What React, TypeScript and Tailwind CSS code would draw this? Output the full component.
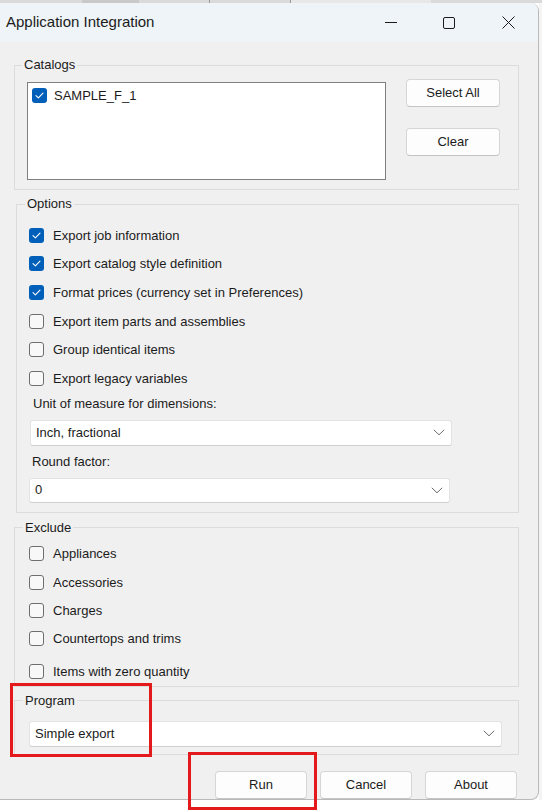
import React from "react";

const font = { fontFamily: '"Liberation Sans", Arial, sans-serif' };

function Check({ checked }: { checked?: boolean }) {
  if (checked) {
    return (
      <span className="w-[15px] h-[15px] rounded-[3px] bg-[#005fb8] flex items-center justify-center shrink-0">
        <svg width="9" height="7" viewBox="0 0 9 7" fill="none">
          <path d="M1 3.6 L3.4 5.8 L8 1.2" stroke="#ffffff" strokeWidth="1.1" strokeLinecap="round" strokeLinejoin="round" />
        </svg>
      </span>
    );
  }
  return <span className="w-[15px] h-[15px] rounded-[3px] border border-[#6e6e6e] bg-[#f8f8f8] shrink-0" />;
}

function CheckRow({ label, checked, h = "h-[28.6px]" }: { label: string; checked?: boolean; h?: string }) {
  return (
    <div className={`${h} flex items-center gap-[9px]`}>
      <Check checked={checked} />
      <span className="text-[13px] text-[#1b1b1b] leading-none">{label}</span>
    </div>
  );
}

function Chevron() {
  return (
    <svg width="12" height="7" viewBox="0 0 12 7" fill="none">
      <path d="M0.8 0.8 L6 5.8 L11.2 0.8" stroke="#6a6a6a" strokeWidth="1" />
    </svg>
  );
}

function Combo({ value, className }: { value: string; className: string }) {
  return (
    <div
      className={`${className} bg-white rounded-[3px] border border-[#e3e3e3] border-b-[#cfcfcf] flex items-center justify-between pl-[5px] pr-[6px]`}
    >
      <span className="text-[13px] text-[#1b1b1b]">{value}</span>
      <Chevron />
    </div>
  );
}

function Btn({ label, className }: { label: string; className?: string }) {
  return (
    <button
      className={`${className ?? ""} bg-[#fdfdfd] border border-[#d6d6d6] border-b-[#c4c4c4] rounded-[4px] text-[13px] text-[#1b1b1b] flex items-center justify-center`}
    >
      {label}
    </button>
  );
}

function Legend({ children, className }: { children: React.ReactNode; className: string }) {
  return <legend className={`${className} px-[2px] text-[13px] leading-[16px] text-[#1b1b1b]`}>{children}</legend>;
}

export default function App() {
  return (
    <div className="w-[542px] h-[812px] bg-white flex flex-col overflow-hidden relative" style={font}>
      {/* background app peeking above */}
      <div className="h-[3px] bg-[#dadada] flex shrink-0">
        <div className="w-[82px]" />
        <div className="w-[57px] bg-[#c9c9c9]" />
        <div className="w-[70px]" />
        <div className="w-[1px] bg-[#9a9a9a]" />
        <div className="w-[80px]" />
        <div className="w-[1px] bg-[#9a9a9a]" />
        <div className="w-[140px] bg-[#e8e8e8]" />
      </div>

      <div className="flex shrink-0">
        {/* window */}
        <div className="w-[539px] h-[797px] bg-[#f0f0f0] rounded-tr-[8px] rounded-br-[8px] border-r border-b border-[#b9b9b9] flex flex-col overflow-hidden">
          {/* title bar */}
          <div className="h-[39px] bg-[#eef4f7] flex items-center shrink-0">
            <span className="ml-[6px] text-[15px] text-[#1b1b1b]">Application Integration</span>
            <div className="ml-auto flex items-center">
              <div className="w-[12px] h-[1px] bg-[#1b1b1b] mr-[46px]" />
              <div className="w-[12px] h-[12px] border border-[#1b1b1b] rounded-[2px] mr-[47px]" />
              <svg width="13" height="13" viewBox="0 0 13 13" className="mr-[23px]">
                <path d="M0.5 0.5 L12.5 12.5 M12.5 0.5 L0.5 12.5" stroke="#1b1b1b" strokeWidth="1" />
              </svg>
            </div>
          </div>

          {/* Catalogs */}
          <fieldset className="mt-[15px] ml-[14px] mr-[19px] border border-[#dcdcdc] pl-[12px] pr-[18px] pt-[6px] pb-[9px]">
            <Legend className="-ml-[5px]">Catalogs</Legend>
            <div className="flex items-start">
              <div className="mt-[3px] w-[359px] h-[98px] bg-white border border-[#7f7f7f] pl-[4px] pt-[3px]">
                <div className="flex items-center gap-[7px]">
                  <Check checked />
                  <span className="text-[13px] text-[#1b1b1b]">SAMPLE_F_1</span>
                </div>
              </div>
              <div className="ml-auto flex flex-col gap-[21px]">
                <Btn label="Select All" className="w-[94px] h-[28px]" />
                <Btn label="Clear" className="w-[94px] h-[28px]" />
              </div>
            </div>
          </fieldset>

          {/* Options */}
          <fieldset className="mt-[6px] ml-[16px] mr-[19px] border border-[#dcdcdc] pl-[12px] pt-[9px] pb-[9px]">
            <Legend className="-ml-[4px]">Options</Legend>
            <CheckRow label="Export job information" checked />
            <CheckRow label="Export catalog style definition" checked />
            <CheckRow label="Format prices (currency set in Preferences)" checked />
            <CheckRow label="Export item parts and assemblies" />
            <CheckRow label="Group identical items" />
            <CheckRow label="Export legacy variables" />
            <div className="mt-[3px] pl-[4px] h-[16px] leading-[16px] text-[13px] text-[#1b1b1b]">
              Unit of measure for dimensions:
            </div>
            <Combo value="Inch, fractional" className="mt-[8px] w-[422px] h-[26px] ml-[1px]" />
            <div className="mt-[8px] pl-[3px] h-[16px] leading-[16px] text-[13px] text-[#1b1b1b]">Round factor:</div>
            <Combo value="0" className="mt-[8px] w-[421px] h-[25px]" />
          </fieldset>

          {/* Exclude */}
          <fieldset className="mt-[7px] ml-[14px] mr-[19px] border border-[#dcdcdc] pl-[14px] pt-[4px] pb-0">
            <Legend className="-ml-[6px]">Exclude</Legend>
            <CheckRow label="Appliances" h="h-[28.4px]" />
            <CheckRow label="Accessories" h="h-[28.4px]" />
            <CheckRow label="Charges" h="h-[28.4px]" />
            <CheckRow label="Countertops and trims" h="h-[28.4px]" />
            <CheckRow label="Items with zero quantity" h="mt-[4px] h-[28.4px]" />
          </fieldset>

          {/* Program */}
          <fieldset className="mt-[6px] ml-[14px] mr-[19px] border border-[#dcdcdc] pl-[14px] pr-[16px] pt-[12px] pb-[7px]">
            <Legend className="-ml-[6px]">Program</Legend>
            <Combo value="Simple export" className="w-full h-[26px]" />
          </fieldset>

          {/* buttons */}
          <div className="mt-[16px] flex justify-end gap-[13px] pr-[21px]">
            <Btn label="Run" className="w-[92px] h-[28px]" />
            <Btn label="Cancel" className="w-[92px] h-[28px]" />
            <Btn label="About" className="w-[92px] h-[28px]" />
          </div>
        </div>
        <div className="w-[3px] h-[797px] bg-[#f4f4f4]" />
      </div>

      {/* annotation rectangles */}
      <div className="absolute left-[10px] top-[683px] w-[142px] h-[74px] border-[3px] border-[#e3191c]" />
      <div className="absolute left-[188px] top-[752px] w-[129px] h-[58px] border-[3px] border-[#e3191c]" />
    </div>
  );
}
